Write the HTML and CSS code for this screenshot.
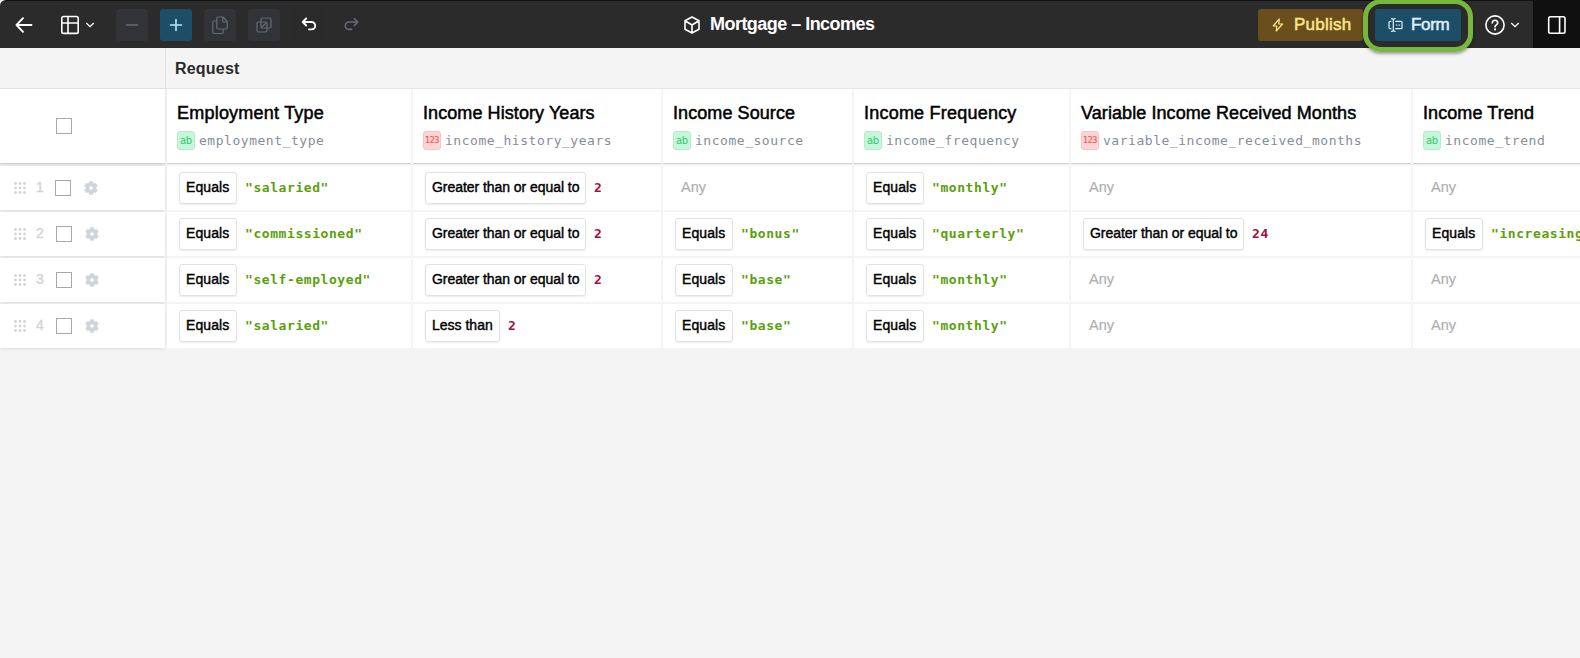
FILE: index.html
```
<!DOCTYPE html>
<html lang="en">
<head>
<meta charset="utf-8">
<title>Mortgage – Incomes</title>
<link rel="stylesheet" href="styles.css">
</head>
<body>
<svg class="defs" width="0" height="0">
  <symbol id="gear" viewBox="0 0 14 14"><path fill="currentColor" fill-rule="evenodd" stroke="currentColor" stroke-width=".6" stroke-linejoin="round" d="M5.400 .4h3.200l.4 1.900 1 .6 1.850-.6 1.600 2.700L12 6.300v1.400l1.450 1.300-1.600 2.700-1.850-.6-1 .6-.4 1.900H5.400L5 11.700l-1-.6-1.850.6-1.600-2.700L2 7.700V6.300L.55 5l1.600-2.700L4 2.900l1-.6zM7 4.900a2.100 2.100 0 100 4.200 2.100 2.100 0 000-4.200z"/></symbol>
  <symbol id="grip" viewBox="0 0 12 12"><g fill="currentColor"><circle cx="1.500" cy="1.500" r="1.400"/><circle cx="6" cy="1.500" r="1.400"/><circle cx="10.500" cy="1.500" r="1.400"/><circle cx="1.500" cy="6" r="1.400"/><circle cx="6" cy="6" r="1.400"/><circle cx="10.500" cy="6" r="1.400"/><circle cx="1.500" cy="10.500" r="1.400"/><circle cx="6" cy="10.500" r="1.400"/><circle cx="10.500" cy="10.500" r="1.400"/></g></symbol>
  <symbol id="chev" viewBox="0 0 10 6"><path d="M1.300 1l3.700 3.700L8.700 1" fill="none" stroke="currentColor" stroke-width="1.300"/></symbol>
</svg>
<header class="toolbar">
  <div class="left">
    <svg class="back" width="18" height="16" viewBox="0 0 18 16"><path d="M8 1.200L1.500 8 8 14.800M1.500 8H16.500" class="ln w17"/></svg>
    <svg class="tableicon" width="20" height="20" viewBox="0 0 20 20"><path d="M3.500 1.500h13a1.700 1.700 0 011.700 1.700v13.500a1.700 1.700 0 01-1.700 1.700h-13a1.700 1.700 0 01-1.700-1.700V3.200A1.700 1.700 0 013.500 1.500zM1.800 8h16.400M8 1.500v17" class="ln w15"/></svg>
    <svg class="chev" width="10" height="6"><use href="#chev"/></svg>
    <div class="tools">
      <button class="tool dim"><svg width="32" height="32"><path d="M10.500 16h11" class="ln w15"/></svg></button>
      <button class="tool add"><svg width="32" height="32"><path d="M10.500 16h11M16 10.500v11" class="ln w15"/></svg></button>
      <button class="tool dim"><svg width="32" height="32"><path d="M14 8h5l4.200 4.500v6.300a1.200 1.200 0 01-1.200 1.200h-8a1.200 1.200 0 01-1.200-1.200V9.200A1.200 1.200 0 0114 8zM18.700 8v4a1 1 0 001 1h3.500M12.500 12H10a1.200 1.200 0 00-1.200 1.200v10.100a1.200 1.200 0 001.200 1.200h8a1.200 1.200 0 001.200-1.200V20" class="ln w12"/></svg></button>
      <button class="tool dim"><svg width="32" height="32"><rect x="13" y="9" width="10" height="10" rx="1.500" class="ln w12"/><rect x="9" y="13" width="10" height="10" rx="1.500" class="ln w12"/><path d="M13.500 18.500l5-5" class="ln w12"/></svg></button>
      <button class="tool ghost white"><svg width="32" height="32"><path d="M14.200 9.500l-3.500 3.500 3.500 3.500M11 13h8.500a3.700 3.700 0 010 7.400H17" class="ln w17"/></svg></button>
      <button class="tool ghost"><svg width="32" height="32"><path d="M18.300 9.500l3.500 3.500-3.500 3.500M21.500 13H13a3.700 3.700 0 000 7.400h2.500" class="ln w15"/></svg></button>
    </div>
  </div>
  <div class="title">
    <svg width="18" height="18" viewBox="0 0 18 18"><path d="M9 1l7 3.800v8.400L9 17l-7-3.800V4.800zM2 4.800L9 9l7-4.200M9 9v8" class="ln w15"/></svg>
    <span>Mortgage – Incomes</span>
  </div>
  <div class="right">
    <button class="action publish"><svg width="12" height="14" viewBox="0 0 12 14"><path d="M7.300 1L1.200 8h3.600l-.6 5L10.600 6H6.800z" class="ln w12"/></svg><span>Publish</span></button>
    <button class="action form"><svg width="15" height="14" viewBox="0 0 15 14"><path d="M3.500 .7q1.800 0 1.800 1.300v10q0 1.300-1.800 1.300M7.100 .7Q5.300 .7 5.300 2M5.300 12q0 1.300 1.800 1.300M3 3.300h-.8A1.200 1.200 0 001 4.500v5a1.200 1.200 0 001.200 1.200H3M7.700 3.300H13a1 1 0 011 1v5.400a1 1 0 01-1 1H7.700M8.300 7h.6M10.900 7h.6" class="ln w12"/></svg><span>Form</span><i class="ring"></i></button>
    <svg class="help" width="20" height="20" viewBox="0 0 20 20"><circle cx="10" cy="10" r="9.100" class="ln w15"/><path d="M7.300 7.900a2.700 2.700 0 115.400 0c0 1.900-2.700 2-2.700 4" class="ln w15"/><circle cx="10" cy="14.400" r="1.100" fill="currentColor"/></svg>
    <svg class="chev" width="10" height="6"><use href="#chev"/></svg>
    <div class="panel"><svg width="20" height="20" viewBox="0 0 20 20"><rect x="1.700" y="1.800" width="16.300" height="16.400" rx="1.700" class="ln w15"/><path d="M12.600 2v16" class="ln w15"/></svg></div>
  </div>
</header>
<div class="group"><div></div><div class="request">Request</div></div>
<main class="grid">
  <div class="side head"><i class="box"></i></div>
  <div class="head"><h2 class="t1">Employment Type</h2><p><b class="ab">ab</b>employment_type</p></div>
  <div class="head"><h2 class="t2">Income History Years</h2><p><b class="num">123</b>income_history_years</p></div>
  <div class="head"><h2 class="t2">Income Source</h2><p><b class="ab">ab</b>income_source</p></div>
  <div class="head"><h2 class="t1">Income Frequency</h2><p><b class="ab">ab</b>income_frequency</p></div>
  <div class="head"><h2 class="t2">Variable Income Received Months</h2><p><b class="num">123</b>variable_income_received_months</p></div>
  <div class="head"><h2 class="t2">Income Trend</h2><p><b class="ab">ab</b>income_trend</p></div>

  <div class="side first"><svg class="grip"><use href="#grip"/></svg><span>1</span><i class="box"></i><svg class="gear"><use href="#gear"/></svg></div>
  <div><span class="chip">Equals</span><code>"salaried"</code></div>
  <div><span class="chip wide">Greater than or equal to</span><code class="n">2</code></div>
  <div><em>Any</em></div>
  <div><span class="chip">Equals</span><code>"monthly"</code></div>
  <div><em>Any</em></div>
  <div><em>Any</em></div>

  <div class="side"><svg class="grip"><use href="#grip"/></svg><span>2</span><i class="box"></i><svg class="gear"><use href="#gear"/></svg></div>
  <div><span class="chip">Equals</span><code>"commissioned"</code></div>
  <div><span class="chip wide">Greater than or equal to</span><code class="n">2</code></div>
  <div><span class="chip">Equals</span><code>"bonus"</code></div>
  <div><span class="chip">Equals</span><code>"quarterly"</code></div>
  <div><span class="chip wide">Greater than or equal to</span><code class="n">24</code></div>
  <div><span class="chip">Equals</span><code>"increasing"</code></div>

  <div class="side"><svg class="grip"><use href="#grip"/></svg><span>3</span><i class="box"></i><svg class="gear"><use href="#gear"/></svg></div>
  <div><span class="chip">Equals</span><code>"self-employed"</code></div>
  <div><span class="chip wide">Greater than or equal to</span><code class="n">2</code></div>
  <div><span class="chip">Equals</span><code>"base"</code></div>
  <div><span class="chip">Equals</span><code>"monthly"</code></div>
  <div><em>Any</em></div>
  <div><em>Any</em></div>

  <div class="side"><svg class="grip"><use href="#grip"/></svg><span>4</span><i class="box"></i><svg class="gear"><use href="#gear"/></svg></div>
  <div><span class="chip">Equals</span><code>"salaried"</code></div>
  <div><span class="chip less">Less than</span><code class="n">2</code></div>
  <div><span class="chip">Equals</span><code>"base"</code></div>
  <div><span class="chip">Equals</span><code>"monthly"</code></div>
  <div><em>Any</em></div>
  <div><em>Any</em></div>
</main>
</body>
</html>
```

FILE: styles.css
```
* { box-sizing: border-box; }
html { background: #111; }
body { margin: 0; height: 658px; overflow: hidden; background: #f4f4f4; color: #000; font-family: "Liberation Sans", Arial, sans-serif; }
svg { display: block; flex: none; }
.defs { display: none; }
.ln { fill: none; stroke: currentColor; stroke-linecap: round; stroke-linejoin: round; }
.w12 { stroke-width: 1.2; }
.w15 { stroke-width: 1.6; }
.w17 { stroke-width: 1.9; }
button { border: 0; padding: 0; font: inherit; color: inherit; }

/* Toolbar */
.toolbar { display: grid; grid-template-columns: 684px 1fr 322px; height: 48px; background: #2b2b2b; border-top: 1px solid #111; border-radius: 6px 0 0 0; color: #fff; box-shadow: 0 1px 0 #e6e6e6; }
.left { display: flex; align-items: center; padding-left: 15px; }
.back { margin-right: 27px; }
.chev { margin-left: 6px; }
.right .chev { margin-left: 5px; }
.left .chev { margin-left: 5px; }
.tools { display: flex; gap: 12px; margin-left: 21px; padding-top: 1px; }
.tool { width: 32px; height: 32px; border-radius: 3px; background: #323337; color: #656b78; }
.tool.add { background: #1d4e68; color: #b9e3fb; }
.tool.ghost { background: #2a2a2a; }
.tool.white { color: #fff; }
.title { display: flex; align-items: center; gap: 9px; font-size: 18px; font-weight: 700; letter-spacing: -.53px; margin-left: -1px; white-space: nowrap; }
.right { display: flex; align-items: center; }
.action { position: relative; display: flex; align-items: center; height: 32px; margin-top: 1px; border-radius: 3px; font-size: 17px; -webkit-text-stroke: .5px; }
.publish { width: 105px; padding-left: 14px; gap: 10px; background: #6a4e1c; color: #fde68a; letter-spacing: .25px; }
.form { width: 86px; margin-left: 12px; padding-left: 13px; gap: 8px; background: #1d4e68; color: #e0f2fe; letter-spacing: -.3px; }
.ring { position: absolute; left: -12px; top: -10px; width: 110px; height: 53px; border: 5px solid #76b83f; border-radius: 18px; box-shadow: 0 2px 3px rgba(0,0,0,.35); z-index: 2; }
.help { margin-left: 24px; }
.panel { margin-left: auto; width: 47px; height: 47px; display: flex; align-items: center; padding-left: 14px; background: #101010; }

/* Column group band */
.group { display: grid; grid-template-columns: 165px 1fr; height: 41px; border-bottom: 1px solid #e5e5e5; background: #f4f4f4; }
.request { border-left: 1px solid #e2e2e2; padding-left: 9px; font-size: 16px; line-height: 42px; font-weight: 700; color: #2b2b2b; letter-spacing: .2px; }

/* Decision table */
.grid { display: grid; grid-template-columns: 165px 244px 248px 189px 215px 340px 190px; grid-template-rows: 75px repeat(4, 44px); gap: 2px; width: 1603px; }
.grid > div { display: flex; align-items: center; background: #fff; padding-left: 12px; overflow: hidden; white-space: nowrap; }
.grid > .head { display: block; padding: 13px 0 0 10px; border-bottom: 1px solid #cfcfcf; }
h2 { margin: 0; font-size: 18px; line-height: 22px; font-weight: 400; -webkit-text-stroke: .5px; }
.t1 { letter-spacing: .22px; }
.t2 { letter-spacing: .08px; }
p { display: flex; align-items: center; margin: 7px 0 0; font: 13px/17px "DejaVu Sans Mono", monospace; letter-spacing: .53px; color: #888d99; height: 19px; }
p b { width: 18px; height: 19px; margin-right: 4px; border-radius: 3px; border: 1px solid; text-align: center; font: 10px/17px "DejaVu Sans", sans-serif; letter-spacing: -.3px; }
.ab { background: #c6f7d8; border-color: #b5edca; color: #34c870; }
.num { background: #fed4d4; border-color: #f8c3c3; color: #ee5c5c; }
p .num { font-size: 8px; letter-spacing: -.4px; -webkit-text-stroke: .2px; }
.chip { height: 32px; width: 58px; flex: none; border: 1px solid #e2e2e2; border-radius: 3px; box-shadow: 0 1px 2px rgba(0,0,0,.08); padding-left: 6px; font-size: 14px; line-height: 29px; letter-spacing: .1px; -webkit-text-stroke: .4px; }
.chip.wide { width: 161px; letter-spacing: -.05px; }
.chip.less { width: 75px; letter-spacing: 0; }
code { margin: -1px 0 0 8px; font: bold 13px/20px "DejaVu Sans Mono", monospace; letter-spacing: .57px; color: #5b9f0b; }
code.n { color: #a50f3c; }
em { margin: -2px 0 0 6px; font-style: normal; font-size: 14.500px; color: #b0b0b0; -webkit-text-stroke: .2px; }
.grid > .side { padding-left: 14px; color: #d1d5db; box-shadow: 0 1px 3px rgba(0,0,0,.1); }
.grid > .side.head { padding: 29px 0 0 56px; }
.side span { width: 8px; margin: -2px 12px 0 10px; font-size: 14px; -webkit-text-stroke: .4px; }
.first span { margin-right: 11px; }
.box { display: block; width: 16px; height: 16px; flex: none; border: 1px solid #a9a9a9; background: #fff; }
.grip { width: 12px; height: 12px; }
.gear { width: 14px; height: 14px; margin-left: 13px; }
```
